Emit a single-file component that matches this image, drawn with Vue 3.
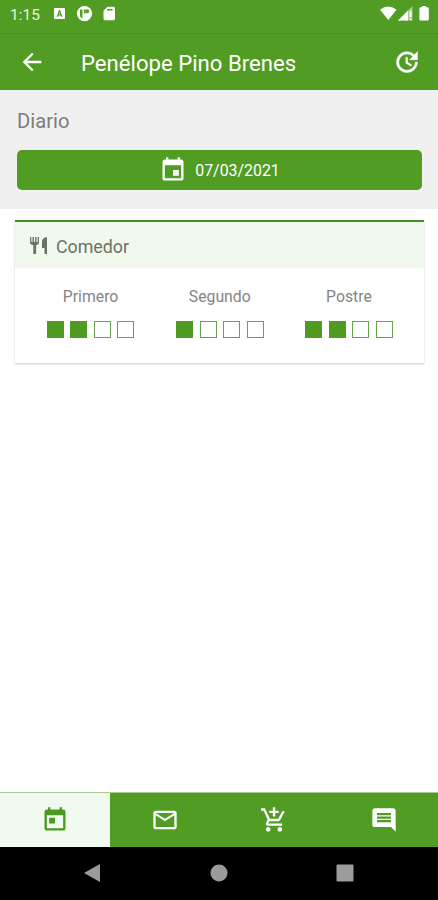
<script setup>
import { ref } from 'vue'

const childName = 'Penélope Pino Brenes'
const date = '07/03/2021'
const activeTab = ref('diary')

const meals = [
    { name: 'Primero', amount: 2 },
    { name: 'Segundo', amount: 1 },
    { name: 'Postre', amount: 2 },
]

const tabs = [
    {
        id: 'diary',
        label: 'Diario',
        path: 'M19 3h-1V1h-2v2H8V1H6v2H5c-1.11 0-1.99.9-1.99 2L3 19c0 1.1.89 2 2 2h14c1.1 0 2-.9 2-2V5c0-1.1-.9-2-2-2zm0 16H5V8h14v11zM7 10h5v5H7z',
    },
    {
        id: 'mail',
        label: 'Correo',
        path: 'M22 6c0-1.1-.9-2-2-2H4c-1.1 0-2 .9-2 2v12c0 1.1.9 2 2 2h16c1.1 0 2-.9 2-2V6zm-2 0l-8 5-8-5h16zm0 12H4V8l8 5 8-5v10z',
    },
    {
        id: 'shop',
        label: 'Compra',
        path: 'M11 9h2V6h3V4h-3V1h-2v3H8v2h3v3zm-4 9c-1.1 0-1.99.9-1.99 2S5.9 22 7 22s2-.9 2-2-.9-2-2-2zm10 0c-1.1 0-1.99.9-1.99 2s.89 2 1.99 2 2-.9 2-2-.9-2-2-2zm-9.83-3.25l.03-.12.9-1.63h7.45c.75 0 1.41-.41 1.75-1.03l3.86-7.01L19.42 4h-.01l-1.1 2-2.76 5H8.53l-.13-.27L6.16 6l-.95-2-.94-2H1v2h2l3.6 7.59-1.35 2.45c-.16.28-.25.61-.25.96 0 1.1.9 2 2 2h12v-2H7.42c-.13 0-.25-.11-.25-.25z',
    },
    {
        id: 'messages',
        label: 'Mensajes',
        path: 'M21.99 4c0-1.1-.89-2-1.99-2H4c-1.1 0-2 .9-2 2v12c0 1.1.9 2 2 2h14l4 4-.01-18zM18 14H6v-2h12v2zm0-3H6V9h12v2zm0-3H6V6h12v2z',
    },
]
</script>
<template>
    <div class="screen">
        <div class="status-bar">
            <span class="clock">1:15</span>
            <svg class="status-left" viewBox="0 0 62 16">
                <path fill-rule="evenodd" d="M1 2h9q1 0 1 1v9q0 1-1 1H1q-1 0-1-1V3q0-1 1-1zM2.7 10.8h1.4l.5-1.4h1.9l.5 1.4h1.4L6.2 4.3H4.9zM5 8.2l.6-1.900.5 1.900z" />
                <path fill-rule="evenodd" d="M30.500 0a7.600 7.600 0 1 1 0 15.200 7.600 7.600 0 0 1 0-15.200zM26 3.400v7.100l2.400 2.100V3.400zM29.800 3.400v4.200h1.700V3.400zM33.200 3.300a2 2 0 1 0 .1 0z" />
                <path fill-rule="evenodd" d="M53.500.7h6q1.500 0 1.500 1.500v10.600q0 1.400-1.500 1.400h-8.600q-1.400 0-1.400-1.400V4.800zM53 3v1.600h5.600V3z" />
            </svg>
            <svg class="status-right" viewBox="0 0 50 16">
                <path d="M0 3.700Q8 -2.600 16.500 3.700L8.300 14z" />
                <path class="faded" d="M32.500 0v14.500H18z" />
                <path d="M28 4.500v10H18z" />
                <path d="M29.800 5h1.700v6h-1.700zM29.800 12.500h1.700v1.800h-1.700z" />
                <path d="M42 1.300V0h4v1.300h1.800q1 0 1 1v11.200q0 1-1 1h-7.400q-1 0-1-1V2.300q0-1 1-1z" />
            </svg>
        </div>
        <header class="app-bar">
            <svg class="icon back" viewBox="0 0 24 24">
                <path d="M20 11H7.83l5.59-5.59L12 4l-8 8 8 8 1.41-1.41L7.83 13H20v-2z" />
            </svg>
            <h1>{{ childName }}</h1>
            <svg class="icon update" viewBox="0 0 24 24">
                <path d="M21 10.12h-6.78l2.74-2.82c-2.73-2.7-7.15-2.8-9.88-.1-2.73 2.71-2.73 7.08 0 9.79s7.15 2.71 9.88 0C18.32 15.65 19 14.08 19 12.1h2c0 1.98-.88 4.55-2.64 6.29-3.51 3.48-9.21 3.48-12.72 0-3.5-3.47-3.53-9.11-.02-12.58s9.14-3.47 12.65 0L21 3v7.12zM12.5 8v4.25l3.5 2.08-.72 1.21L11 13V8h1.5z" />
            </svg>
        </header>
        <section class="date-section">
            <h2>Diario</h2>
            <button class="date-button">
                <svg class="icon" viewBox="0 0 24 24">
                    <path d="M17 12h-5v5h5v-5zM16 1v2H8V1H6v2H5c-1.11 0-1.99.9-1.99 2L3 19c0 1.1.89 2 2 2h14c1.1 0 2-.9 2-2V5c0-1.1-.9-2-2-2h-1V1h-2zm3 18H5V8h14v11z" />
                </svg>
                <span>{{ date }}</span>
            </button>
        </section>
        <main>
            <div class="card">
                <div class="card-header">
                    <svg class="cutlery" viewBox="0 0 18 18">
                        <path d="M0 1h1.300v5h1.200V1h1.400v5h1.200V1h1.400v5h1.200V1H9v5.600Q9 8.600 6.100 9.200V18H3.300V9.200Q0 8.600 0 6.600zM17 1v17h-2.500v-6H12V5.500Q12.400 1.500 17 1z" />
                    </svg>
                    <span>Comedor</span>
                </div>
                <div class="meals">
                    <div class="meal" v-for="meal in meals" :key="meal.name">
                        <p>{{ meal.name }}</p>
                        <div class="boxes">
                            <span class="box" v-for="n in 4" :key="n" :class="{ full: n <= meal.amount }"></span>
                        </div>
                    </div>
                </div>
            </div>
        </main>
        <nav class="tabs">
            <button
                class="tab"
                v-for="tab in tabs"
                :key="tab.id"
                :class="{ active: activeTab === tab.id }"
                :aria-label="tab.label"
                @click="activeTab = tab.id"
            >
                <svg class="icon" viewBox="0 0 24 24"><path :d="tab.path" /></svg>
            </button>
        </nav>
        <div class="system-nav">
            <svg viewBox="0 0 18 18"><path d="M16 0v18L0 9z" /></svg>
            <svg viewBox="0 0 18 18"><circle cx="9" cy="9" r="8.5" /></svg>
            <svg viewBox="0 0 18 18"><rect x=".5" y=".5" width="17" height="17" rx="1" /></svg>
        </div>
    </div>
</template>
<style>
body {
    margin: 0;
}
</style>
<style scoped>
.screen {
    display: flex;
    flex-direction: column;
    width: 438px;
    height: 900px;
    background: #fff;
    font-family: Roboto, sans-serif;
    overflow: hidden;
}
svg {
    display: block;
    fill: currentColor;
    flex-shrink: 0;
}
button {
    border: none;
    padding: 0;
    font-family: inherit;
}
.icon {
    width: 28px;
    height: 28px;
}
.status-bar {
    display: flex;
    box-sizing: border-box;
    height: 33px;
    padding: 6px 8px 0 10px;
    background: #519c22;
    color: #fff;
}
.clock {
    width: 44px;
    font-size: 15.5px;
    line-height: 18px;
    color: #e9f6df;
}
.status-left {
    width: 62px;
    height: 16px;
}
.status-right {
    width: 50px;
    height: 16px;
    margin-left: auto;
}
.faded {
    opacity: 0.5;
}
.app-bar {
    display: flex;
    align-items: center;
    box-sizing: border-box;
    height: 57px;
    padding: 0 17px 0 18px;
    border-top: 1px solid #4a911e;
    background: #519c22;
    color: #fff;
}
.update {
    stroke: currentColor;
    stroke-width: 0.4;
}
h1 {
    flex: 1;
    margin: 1px 0 0 35px;
    font-size: 22.15px;
    font-weight: 400;
    line-height: 28px;
}
.date-section {
    box-sizing: border-box;
    height: 119px;
    padding: 18px 16px 0 17px;
    background: #f0f0f0;
}
h2 {
    margin: 0 0 16px;
    font-size: 20.2px;
    font-weight: 400;
    line-height: 26px;
    color: #7c7c7c;
}
.date-button {
    display: flex;
    align-items: center;
    justify-content: center;
    gap: 8px;
    width: 100%;
    height: 40px;
    border-radius: 5px;
    background: #519c22;
    color: #fff;
    font-size: 15.9px;
}
.date-button span {
    padding-top: 1px;
}
main {
    flex: 1;
    padding: 11px 14px 0 15px;
}
.card {
    height: 143px;
    border-top: 2px solid #429322;
    box-sizing: border-box;
    box-shadow: 0 1px 2px rgba(0, 0, 0, 0.2);
}
.card-header {
    display: flex;
    align-items: center;
    gap: 8px;
    height: 46px;
    padding-left: 15px;
    background: #f1f9ee;
    color: #687366;
    font-size: 17.8px;
}
.card-header span {
    padding-top: 2px;
}
.cutlery {
    width: 18px;
    height: 18px;
}
.meals {
    display: flex;
    padding: 18px 10.5px 0 11px;
}
.meal {
    flex: 1;
}
.meal p {
    margin: 0 0 14px;
    font-size: 15.8px;
    line-height: 21px;
    text-align: center;
    color: #858585;
}
.boxes {
    display: flex;
    justify-content: center;
    gap: 6.5px;
}
.box {
    box-sizing: border-box;
    width: 17px;
    height: 17px;
    border: 1px solid #65a747;
}
.full {
    background: #4f9a20;
    border-color: #4f9a20;
}
.tabs {
    display: flex;
    height: 54px;
    border-top: 1px solid #a9cc94;
}
.tab {
    display: flex;
    flex: 1;
    align-items: center;
    justify-content: center;
    background: #519c22;
    color: #fff;
}
.tab .icon {
    margin-left: 1px;
}
.active {
    background: #f0faee;
    color: #4a9a22;
}
.system-nav {
    display: flex;
    justify-content: center;
    gap: 108px;
    height: 36px;
    padding-top: 17px;
    background: #000;
    color: #9b9b9b;
}
.system-nav svg {
    width: 18px;
    height: 18px;
}
</style>
